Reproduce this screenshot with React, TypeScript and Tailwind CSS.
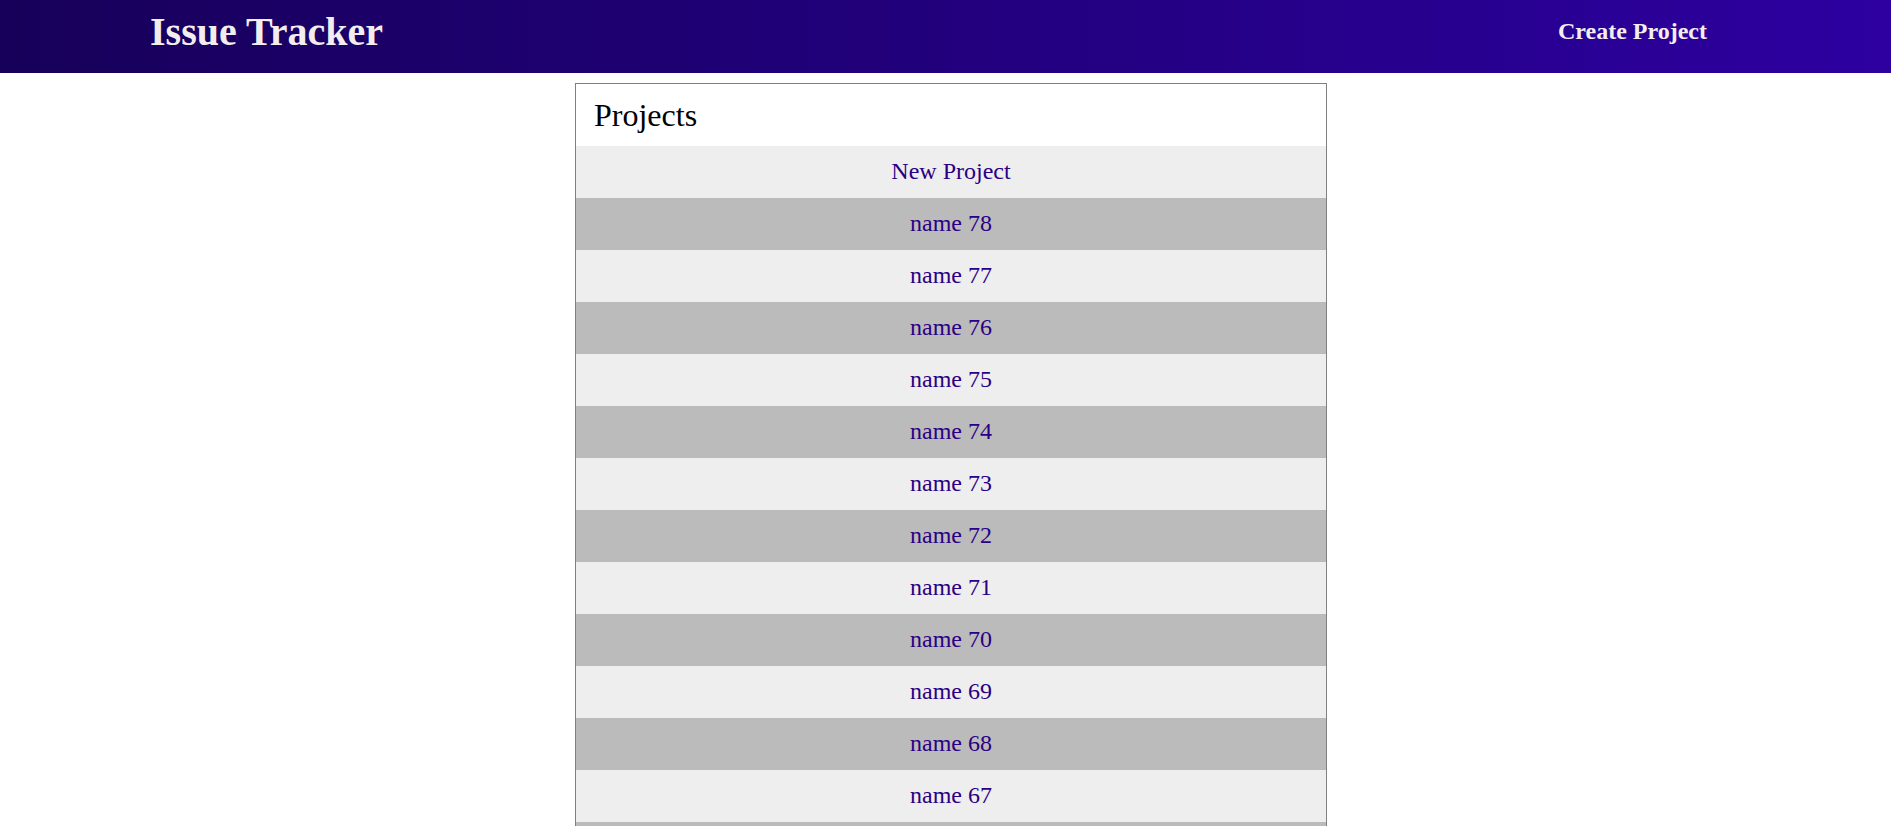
import React from "react";

export default function App() {
  const names: number[] = [];
  for (let i = 78; i >= 1; i--) names.push(i);
  return (
    <div className="min-h-screen bg-white" style={{ fontFamily: '"Liberation Serif", "Times New Roman", serif' }}>
      <header className="h-[73px] flex items-center justify-between pl-[150px] pr-[184px] pb-[9px] bg-linear-to-r/srgb from-[#17005a] to-[#2d00a0]">
        <h1 className="text-[40px] font-bold text-[#f3eeee] leading-[44px]">Issue Tracker</h1>
        <a className="text-[24px] font-bold text-[#f3eeee] leading-[27px] mb-[2px]">Create Project</a>
      </header>
      <div className="ml-[575px] mt-[10px] w-[752px] border border-[#808080] bg-white">
        <div className="h-[62px] pt-[14px] pl-[18px]">
          <h2 className="text-[32px] leading-[35px] text-black">Projects</h2>
        </div>
        <div className="h-[52px] pb-[2px] flex items-center justify-center bg-[#eeeeee]">
          <a className="text-[24px] text-[#2a0084]">New Project</a>
        </div>
        {names.map((n, i) => (
          <div
            key={n}
            className={
              i % 2 === 0
                ? "h-[52px] pb-[2px] flex items-center justify-center bg-[#bbbbbb]"
                : "h-[52px] pb-[2px] flex items-center justify-center bg-[#eeeeee]"
            }
          >
            <a className="text-[24px] text-[#2a0084]">name {n}</a>
          </div>
        ))}
      </div>
    </div>
  );
}
